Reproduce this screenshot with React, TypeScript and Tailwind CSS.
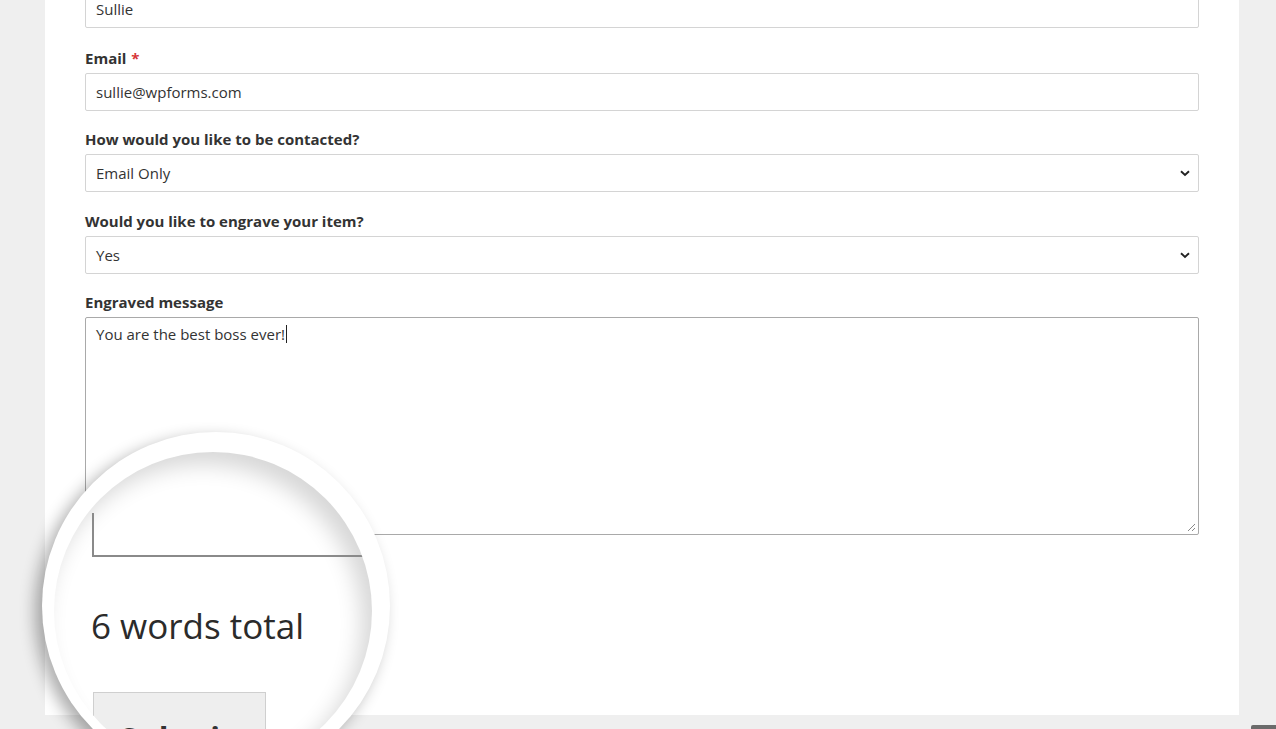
import React from 'react'

const font = { fontFamily: '"Open Sans", "Liberation Sans", sans-serif' }

type FieldProps = {
  label: string
  required?: boolean
  className?: string
  children: React.ReactNode
}

const Field = ({ label, required, className, children }: FieldProps) => (
  <div className={`flex flex-col ${className ?? ''}`}>
    <label className="mb-[3px] text-[15px] leading-[24px] font-bold text-[#333]">
      {label}
      {required && <span className="ml-[5px] text-[#d63637]">*</span>}
    </label>
    {children}
  </div>
)

const Chevron = () => (
  <svg width="10" height="7" viewBox="0 0 10 7" className="text-[#222]">
    <path d="M1 1.2 L5 5 L9 1.2" fill="none" stroke="currentColor" strokeWidth="1.9" />
  </svg>
)

const Select = ({ value }: { value: string }) => (
  <div className="flex h-[38px] items-center justify-between rounded-[2px] border border-[#d4d4d4] bg-white pr-[8px] pl-[10px] text-[15px] text-[#333]">
    <span>{value}</span>
    <Chevron />
  </div>
)

const Magnifier = () => (
  <div className="absolute top-[432px] left-[42px] h-[348px] w-[348px] rounded-full bg-white shadow-[-7px_6px_16px_rgba(0,0,0,0.32)]">
    <div className="absolute top-[20px] left-[12px] h-[318px] w-[318px] overflow-hidden rounded-full bg-white shadow-[inset_-10px_12px_22px_rgba(0,0,0,0.16)]">
      {/* magnified textarea corner */}
      <div className="absolute top-[61px] left-[38px] h-[44px] w-[300px] border-b-2 border-l-2 border-[#8a8a8a]" />
      <div className="absolute top-[154px] left-[37px] text-[35px] leading-[40px] text-[#2b2b2b]">
        6 words total
      </div>
      <div className="absolute top-[240px] left-[39px] h-[80px] w-[173px] border border-[#cfcfcf] bg-[#eeeeee] px-[26px] pt-[22px] text-[32px] font-bold text-[#333]">
        Submit
      </div>
    </div>
  </div>
)

export default function App() {
  return (
    <div className="relative h-[729px] w-[1276px] overflow-hidden bg-[#efefef]" style={font}>
      <div className="ml-[45px] flex h-[715px] w-[1194px] flex-col bg-white pl-[40px]">
        <div className="-mt-[10px] flex w-[1114px] flex-col gap-[16px]">
          <div className="flex h-[38px] items-center rounded-[2px] border border-[#d4d4d4] bg-white px-[10px] text-[15px] text-[#333]">
            Sullie
          </div>
          <div className="pt-[2px]">
            <Field label="Email" required>
              <div className="flex h-[38px] items-center rounded-[2px] border border-[#d4d4d4] bg-white px-[10px] text-[15px] text-[#333]">
                sullie@wpforms.com
              </div>
            </Field>
          </div>
          <Field label="How would you like to be contacted?">
            <Select value="Email Only" />
          </Field>
          <Field label="Would you like to engrave your item?" className="pt-[1px]">
            <Select value="Yes" />
          </Field>
          <Field label="Engraved message">
            <div className="relative h-[218px] rounded-[2px] border border-[#a9a9a9] bg-white px-[10px] pt-[4px] text-[15px] leading-[22px] text-[#333]">
              You are the best boss ever!
              <span className="ml-[1px] inline-block h-[18px] w-px translate-y-[3px] bg-[#222]" />
              <svg width="9" height="9" viewBox="0 0 9 9" className="absolute right-[2px] bottom-[2px]">
                <path d="M8 1 L1 8 M8 5 L5 8" stroke="#888" strokeWidth="1" />
              </svg>
            </div>
          </Field>
        </div>
      </div>
      <div className="absolute right-0 bottom-0 h-[4px] w-[25px] rounded-tl-[2px] bg-[#6b6b6b]" />
      <Magnifier />
    </div>
  )
}
